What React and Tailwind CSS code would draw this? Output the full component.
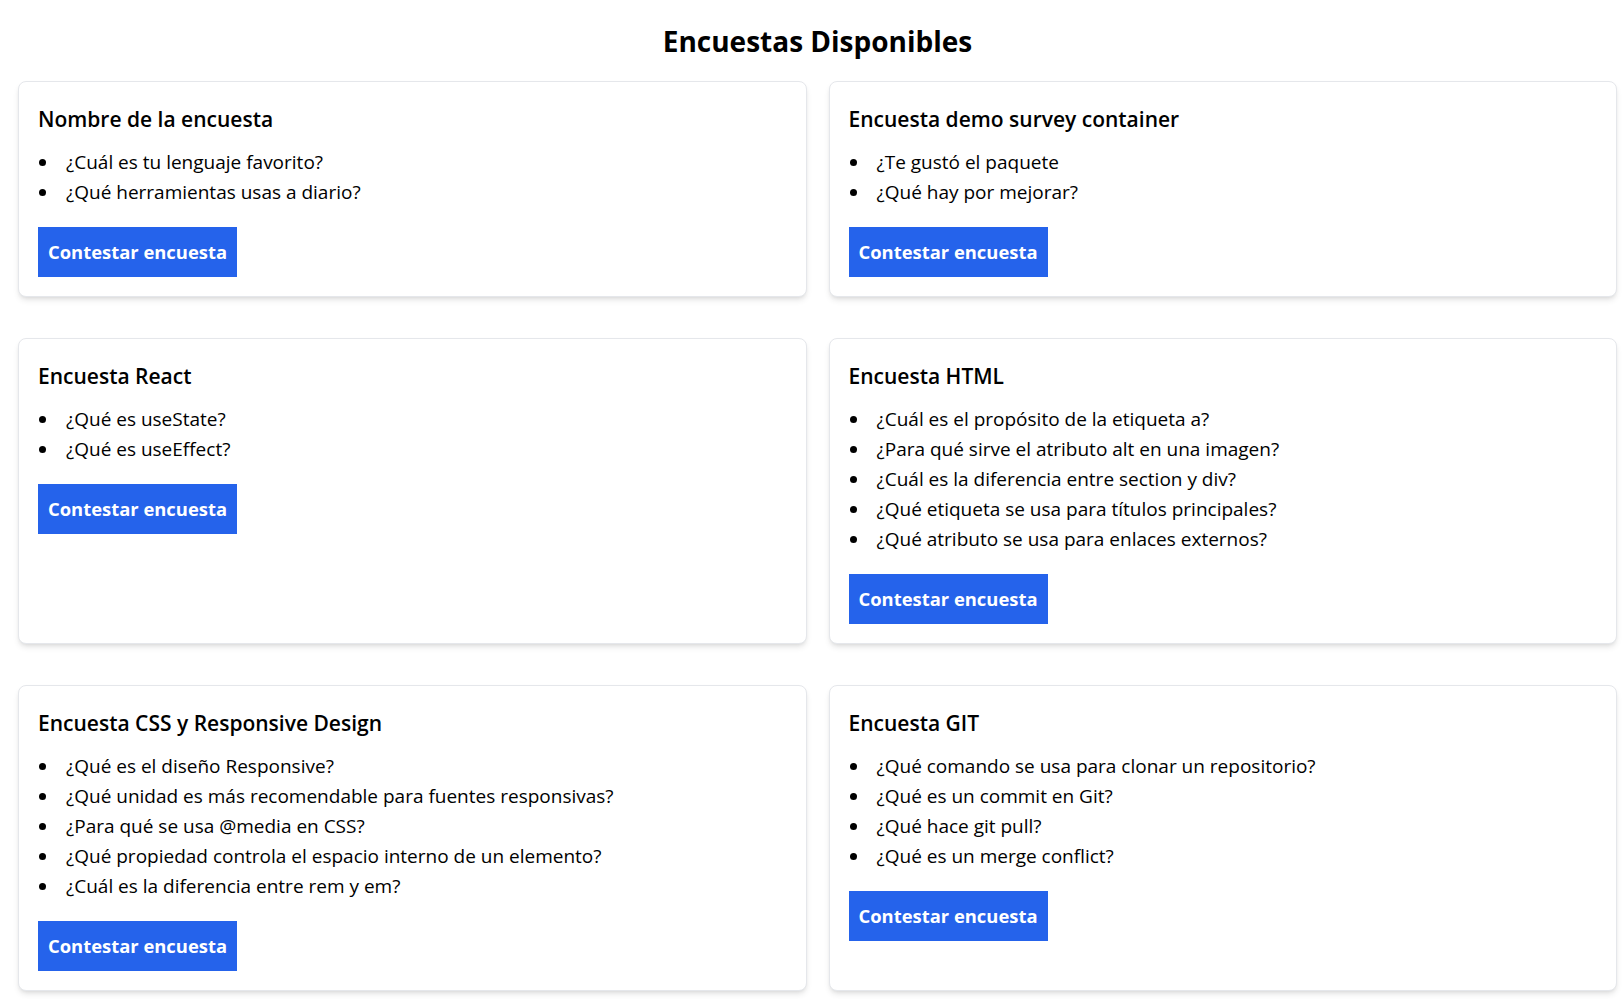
import React from 'react';

const surveys = [
  {
    id: 1,
    title: 'Nombre de la encuesta',
    questions: ['¿Cuál es tu lenguaje favorito?', '¿Qué herramientas usas a diario?'],
  },
  {
    id: 2,
    title: 'Encuesta demo survey container',
    questions: ['¿Te gustó el paquete', '¿Qué hay por mejorar?'],
  },
  {
    id: 3,
    title: 'Encuesta React',
    questions: ['¿Qué es useState?', '¿Qué es useEffect?'],
  },
  {
    id: 4,
    title: 'Encuesta HTML',
    questions: [
      '¿Cuál es el propósito de la etiqueta a?',
      '¿Para qué sirve el atributo alt en una imagen?',
      '¿Cuál es la diferencia entre section y div?',
      '¿Qué etiqueta se usa para títulos principales?',
      '¿Qué atributo se usa para enlaces externos?',
    ],
  },
  {
    id: 5,
    title: 'Encuesta CSS y Responsive Design',
    questions: [
      '¿Qué es el diseño Responsive?',
      '¿Qué unidad es más recomendable para fuentes responsivas?',
      '¿Para qué se usa @media en CSS?',
      '¿Qué propiedad controla el espacio interno de un elemento?',
      '¿Cuál es la diferencia entre rem y em?',
    ],
  },
  {
    id: 6,
    title: 'Encuesta GIT',
    questions: [
      '¿Qué comando se usa para clonar un repositorio?',
      '¿Qué es un commit en Git?',
      '¿Qué hace git pull?',
      '¿Qué es un merge conflict?',
    ],
  },
];

const SurveyCard = ({ survey }) => {
  return (
    <div className="bg-white border border-gray-200 rounded-lg shadow-md px-[19px] pt-[20px] pb-[19px]">
      <h3 className="text-[21px] leading-[30px] font-semibold text-black mb-[15px] pt-[2px]">{survey.title}</h3>
      <ul className="list-disc pl-[21px] mb-5 -mt-[2px]">
        {survey.questions.map((q) => (
          <li key={q} className="text-[19px] leading-[30px] text-black pl-[7px]">
            {q}
          </li>
        ))}
      </ul>
      <button className="h-[50px] px-[10px] bg-[#2563eb] text-white text-[18.4px] font-bold">
        Contestar encuesta
      </button>
    </div>
  );
};

const App = () => {
  return (
    <div className="min-h-screen bg-white pl-[18px] pr-[5px] pt-[23px] pb-6 font-['Open_Sans','Noto_Sans',sans-serif]">
      <h2 className="text-[28px] leading-[36px] font-bold text-center text-black mb-[22px]">
        Encuestas Disponibles
      </h2>
      <div className="grid grid-cols-2 gap-x-[22px] gap-y-[41px]">
        {surveys.map((s) => (
          <SurveyCard key={s.id} survey={s} />
        ))}
      </div>
    </div>
  );
};

export default App;
